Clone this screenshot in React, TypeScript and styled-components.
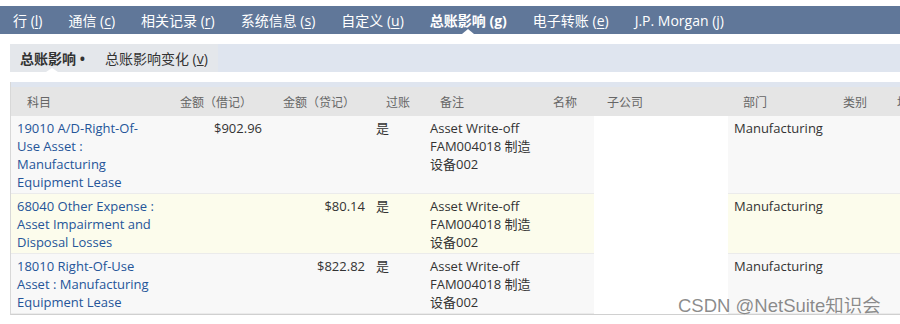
import React from 'react'
import { styled, createGlobalStyle } from 'styled-components'

const GlobalStyle = createGlobalStyle`
  body {
    margin: 0;
    background: #fff;
    font-family: 'Open Sans', 'Noto Sans CJK SC', sans-serif;
  }
`

const cols = '153px 103px 103px 54px 118px 52px 134px 99px 54px 1fr'

const Page = styled.div`
  position: relative;
  width: 900px;
  height: 324px;
  overflow: hidden;
  padding-top: 6px;
  box-sizing: border-box;
`

const NavBar = styled.nav`
  display: flex;
  height: 28px;
  background: #607799;
`

const NavItem = styled.div<{ $active?: boolean }>`
  position: relative;
  display: flex;
  align-items: center;
  padding: 0 13px;
  color: #fff;
  font-size: 14px;
  font-weight: ${p => (p.$active ? 700 : 400)};
  white-space: nowrap;

  u {
    text-decoration-thickness: 1px;
    text-underline-offset: 2px;
  }

  &::after {
    content: '';
    display: ${p => (p.$active ? 'block' : 'none')};
    position: absolute;
    left: 50%;
    bottom: 0;
    transform: translateX(-50%);
    border-left: 6px solid transparent;
    border-right: 6px solid transparent;
    border-bottom: 5px solid #fff;
  }
`

const Content = styled.div`
  padding-left: 10px;
  margin-top: 10px;
`

const SubTabBar = styled.div`
  display: flex;
  height: 28px;
  background: #dfe5ef;
`

const SubTabGroup = styled.div`
  display: flex;
  background: #e4e7eb;
`

const SubTab = styled.div<{ $active?: boolean }>`
  position: relative;
  display: flex;
  align-items: center;
  padding: 0 10px;
  color: #333;
  font-size: 14px;
  font-weight: ${p => (p.$active ? 700 : 400)};
  white-space: nowrap;

  &::after {
    content: '';
    display: ${p => (p.$active ? 'block' : 'none')};
    position: absolute;
    left: 36px;
    bottom: 0;
    border-left: 6px solid transparent;
    border-right: 6px solid transparent;
    border-bottom: 4px solid #fff;
  }
`

const Table = styled.div`
  margin-top: 10px;
  border-left: 1px solid #d8d8d8;
  border-bottom: 1px solid #d0d0d0;
`

const TableBand = styled.div`
  height: 5px;
  background: #dfe5ef;
`

const HeadRow = styled.div`
  display: grid;
  grid-template-columns: ${cols};
  height: 29px;
  background: #e5e5e5;
`

const HeadCell = styled.div<{ $indent?: number }>`
  display: flex;
  align-items: center;
  padding-left: ${p => p.$indent ?? 16}px;
  color: #666;
  font-size: 12px;
  white-space: nowrap;
  overflow: hidden;
`

const Row = styled.div`
  display: grid;
  grid-template-columns: ${cols};
`

const Cell = styled.div<{ $tone: 'grey' | 'yellow'; $blank?: boolean; $right?: boolean }>`
  padding: 3px ${p => (p.$right ? '5px' : '6px')} 2px 6px;
  background: ${p => (p.$blank ? '#fff' : p.$tone === 'yellow' ? '#fcfcec' : '#f8f8f8')};
  border-bottom: 1px solid ${p => (p.$blank ? '#fff' : '#ebebeb')};
  color: #333;
  font-size: 13px;
  line-height: 18px;
  text-align: ${p => (p.$right ? 'right' : 'left')};
`

const AccountLink = styled.a`
  color: #255599;
  text-decoration: none;
`

const Watermark = styled.div`
  position: absolute;
  left: 678px;
  top: 296px;
  font-family: 'Liberation Sans', 'Noto Sans CJK SC', sans-serif;
  font-size: 18.5px;
  line-height: 20px;
  color: rgba(95, 95, 95, 0.72);
  white-space: nowrap;
`

const navItems = [
  { label: '行', key: 'l' },
  { label: '通信', key: 'c' },
  { label: '相关记录', key: 'r' },
  { label: '系统信息', key: 's' },
  { label: '自定义', key: 'u' },
  { label: '总账影响', key: 'g', active: true },
  { label: '电子转账', key: 'e' },
  { label: 'J.P. Morgan', key: 'j', plain: true },
]

const headers: { label: string; indent?: number }[] = [
  { label: '科目' },
  { label: '金额（借记）' },
  { label: '金额（贷记）' },
  { label: '过账' },
  { label: '备注' },
  { label: '名称', indent: 11 },
  { label: '子公司', indent: 13 },
  { label: '部门', indent: 15 },
  { label: '类别' },
  { label: '地点' },
]

const rows: { account: string; debit: string; credit: string; tone: 'grey' | 'yellow' }[] = [
  { account: '19010 A/D-Right-Of-Use Asset : Manufacturing Equipment Lease', debit: '$902.96', credit: '', tone: 'grey' },
  { account: '68040 Other Expense : Asset Impairment and Disposal Losses', debit: '', credit: '$80.14', tone: 'yellow' },
  { account: '18010 Right-Of-Use Asset : Manufacturing Equipment Lease', debit: '', credit: '$822.82', tone: 'grey' },
]

export default function App() {
  return (
    <Page>
      <GlobalStyle />
      <NavBar>
        {navItems.map(n => (
          <NavItem key={n.key} $active={n.active}>
            {n.label}&nbsp;(
            {n.active || n.plain ? n.key : <u>{n.key}</u>})
          </NavItem>
        ))}
      </NavBar>
      <Content>
        <SubTabBar>
          <SubTabGroup>
            <SubTab $active>总账影响 •</SubTab>
            <SubTab>
              总账影响变化 (<u>v</u>)
            </SubTab>
          </SubTabGroup>
        </SubTabBar>
        <Table>
          <TableBand />
          <HeadRow>
            {headers.map(h => (
              <HeadCell key={h.label} $indent={h.indent}>
                {h.label}
              </HeadCell>
            ))}
          </HeadRow>
          {rows.map(r => (
            <Row key={r.account}>
              <Cell $tone={r.tone}>
                <AccountLink href="#">{r.account}</AccountLink>
              </Cell>
              <Cell $tone={r.tone} $right>{r.debit}</Cell>
              <Cell $tone={r.tone} $right>{r.credit}</Cell>
              <Cell $tone={r.tone}>是</Cell>
              <Cell $tone={r.tone}>Asset Write-off FAM004018 制造设备002</Cell>
              <Cell $tone={r.tone} />
              <Cell $tone={r.tone} $blank />
              <Cell $tone={r.tone}>Manufacturing</Cell>
              <Cell $tone={r.tone} />
              <Cell $tone={r.tone} />
            </Row>
          ))}
        </Table>
      </Content>
      <Watermark>CSDN @NetSuite知识会</Watermark>
    </Page>
  )
}
